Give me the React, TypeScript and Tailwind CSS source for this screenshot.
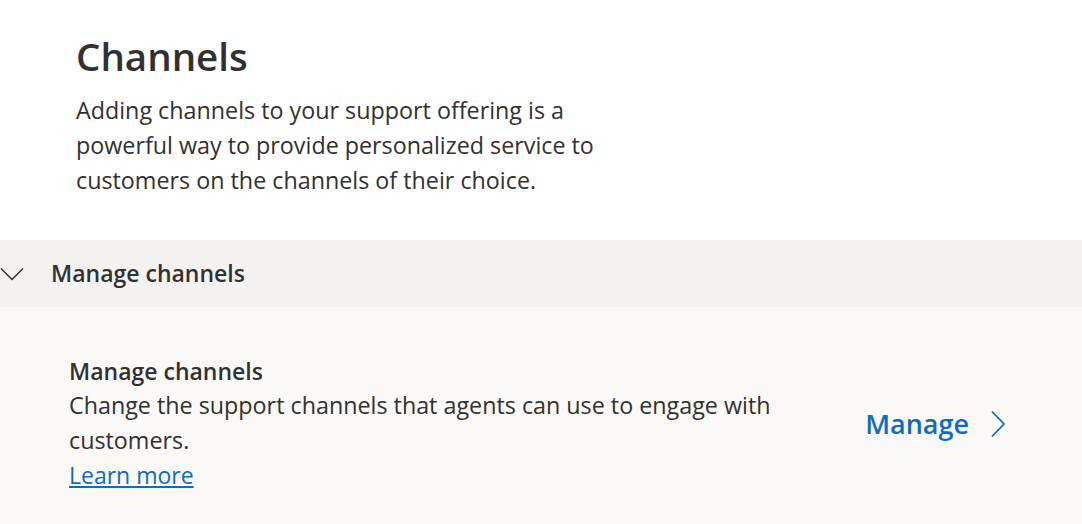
import React from "react";

const font = { fontFamily: '"Open Sans", "Noto Sans", sans-serif' };

function ChevronDown() {
  return (
    <svg width="24" height="14" viewBox="0 0 24 14" fill="none" className="shrink-0">
      <path d="M1 1.5 L12 12.5 L23 1.5" stroke="#323130" strokeWidth="1.5" />
    </svg>
  );
}

function ChevronRight() {
  return (
    <svg width="16" height="28" viewBox="0 0 16 28" fill="none" className="shrink-0">
      <path d="M2 1.5 L14 14 L2 26.5" stroke="#0f6cbd" strokeWidth="1.8" />
    </svg>
  );
}

export default function App() {
  return (
    <div className="w-[1082px] h-[524px] bg-white text-[#323130] overflow-hidden" style={font}>
      {/* Page header */}
      <div className="pl-[76px] pt-[30px] pb-[42px]">
        <h1 className="text-[38.5px] leading-[52px] font-semibold">Channels</h1>
        <p className="mt-[11px] w-[560px] text-[23.3px] leading-[35px]">
          Adding channels to your support offering is a powerful way to provide personalized service
          to customers on the channels of their choice.
        </p>
      </div>

      {/* Accordion */}
      <div className="bg-[#f3f2f1] h-[67px] flex items-center gap-[27px]">
        <ChevronDown />
        <span className="text-[23px] font-semibold">Manage channels</span>
      </div>
      <div className="bg-[#faf9f8] h-[217px] pl-[69px] pr-[76px] pt-[47px] flex items-start justify-between">
        <div className="w-[730px]">
          <h2 className="text-[23px] leading-[34px] font-semibold">Manage channels</h2>
          <p className="text-[23.3px] leading-[35px]">
            Change the support channels that agents can use to engage with customers.
          </p>
          <a href="#" className="text-[23px] leading-[35px] text-[#0f6cbd] underline">
            Learn more
          </a>
        </div>
        <button className="mt-[50px] flex items-center gap-[21px] text-[#0f6cbd] text-[27px] font-semibold">
          Manage
          <ChevronRight />
        </button>
      </div>
    </div>
  );
}
